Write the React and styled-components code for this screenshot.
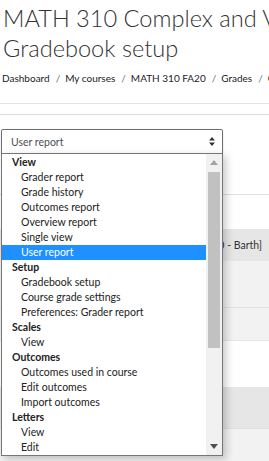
import React from 'react';
import styled, { createGlobalStyle } from 'styled-components';

const GlobalStyle = createGlobalStyle`
  body {
    margin: 0;
    background: #fff;
    font-family: Lato, "Noto Sans", sans-serif;
    color: #333;
    overflow: hidden;
  }
`;

const Page = styled.div`
  width: 269px;
  height: 461px;
  overflow: hidden;
  position: relative;
`;

const Title = styled.h1`
  margin: 3px 0 0 3px;
  font-size: 23.6px;
  line-height: 30px;
  font-weight: 300;
  color: #333;
  white-space: nowrap;
`;

const Crumbs = styled.nav`
  display: flex;
  align-items: center;
  margin: 8px 0 0 2px;
  font-size: 10px;
  line-height: 15px;
  color: #1d2125;
  white-space: nowrap;
`;

const Sep = styled.span`
  color: #6a737b;
  padding: 0 5px 0 6px;
`;

const TabStrip = styled.div`
  margin-top: 17px;
  height: 10px;
  border-top: 1px solid #e3e3e3;
  border-bottom: 1px solid #dcdcdc;
`;

const SelectWrap = styled.div`
  position: relative;
  margin: 14px 0 0 1px;
  width: 222px;
  z-index: 2;
`;

const SelectBox = styled.div`
  box-sizing: border-box;
  height: 25px;
  border: 1px solid #6e6e6e;
  border-radius: 2px 2px 0 0;
  display: flex;
  align-items: center;
  justify-content: space-between;
  padding: 0 7px 0 9px;
  font-size: 10.5px;
  color: #495057;
  box-shadow: 0 1px 2px rgba(0, 0, 0, 0.15);
`;

const Dropdown = styled.div`
  position: absolute;
  top: 24px;
  left: 0;
  box-sizing: border-box;
  width: 222px;
  height: 303px;
  border: 1px solid #767676;
  background: #fff;
  display: flex;
  box-shadow: 3px 3px 8px rgba(0, 0, 0, 0.22);
`;

const List = styled.ul`
  list-style: none;
  margin: 0;
  padding: 1px 0 0 0;
  flex: 1;
  overflow: hidden;
`;

const Option = styled.li`
  height: 15px;
  line-height: 15px;
  font-size: 10.5px;
  white-space: nowrap;
  padding-left: ${(p) => (p.$group ? '10px' : '19px')};
  font-weight: ${(p) => (p.$group ? 700 : 400)};
  color: ${(p) => (p.$active ? '#fff' : '#222')};
  background: ${(p) => (p.$active ? '#1e90ff' : 'transparent')};
`;

const Scrollbar = styled.div`
  width: 16px;
  background: #f1f1f1;
  display: flex;
  flex-direction: column;
`;

const ScrollButton = styled.div`
  height: 17px;
  display: flex;
  align-items: center;
  justify-content: center;
`;

const Track = styled.div`
  flex: 1;
  padding: 1px 2px 0 2px;
`;

const Thumb = styled.div`
  height: 176px;
  background: #c1c1c1;
`;

const Table = styled.div`
  margin-top: 40px;
  border-top: 1px solid #dee2e6;
`;

const Row = styled.div`
  height: ${(p) => p.$h}px;
  background: ${(p) => p.$bg};
  border-bottom: ${(p) => (p.$line ? `1px solid ${p.$line}` : 'none')};
  box-sizing: border-box;
  display: flex;
  align-items: center;
  justify-content: flex-end;
  padding-right: 7px;
  font-size: 10.5px;
  color: #333;
  white-space: nowrap;
`;

const Arrow = ({ dir, color }) => (
  <svg width="8" height="5" viewBox="0 0 8 5">
    {dir === 'up' ? (
      <polygon points="0,5 4,0 8,5" fill={color} />
    ) : (
      <polygon points="0,0 8,0 4,5" fill={color} />
    )}
  </svg>
);

const SortIcon = () => (
  <svg width="6" height="9" viewBox="0 0 6 9">
    <polygon points="0,3.5 3,0 6,3.5" fill="#333" />
    <polygon points="0,5.5 6,5.5 3,9" fill="#333" />
  </svg>
);

const options = [
  { label: 'View', group: true },
  { label: 'Grader report' },
  { label: 'Grade history' },
  { label: 'Outcomes report' },
  { label: 'Overview report' },
  { label: 'Single view' },
  { label: 'User report', active: true },
  { label: 'Setup', group: true },
  { label: 'Gradebook setup' },
  { label: 'Course grade settings' },
  { label: 'Preferences: Grader report' },
  { label: 'Scales', group: true },
  { label: 'View' },
  { label: 'Outcomes', group: true },
  { label: 'Outcomes used in course' },
  { label: 'Edit outcomes' },
  { label: 'Import outcomes' },
  { label: 'Letters', group: true },
  { label: 'View' },
  { label: 'Edit' },
];

export default function App() {
  return (
    <Page>
      <GlobalStyle />
      <Title>
        MATH 310 Complex and Vector Analysis
        <br />
        Gradebook setup
      </Title>
      <Crumbs>
        <span>Dashboard</span>
        <Sep>/</Sep>
        <span>My courses</span>
        <Sep>/</Sep>
        <span>MATH 310 FA20</span>
        <Sep>/</Sep>
        <span>Grades</span>
        <Sep>/</Sep>
        <span>Gradebook setup</span>
      </Crumbs>
      <TabStrip />
      <SelectWrap>
        <SelectBox>
          <span>User report</span>
          <SortIcon />
        </SelectBox>
        <Dropdown>
          <List>
            {options.map((o, i) => (
              <Option key={i} $group={o.group} $active={o.active}>
                {o.label}
              </Option>
            ))}
          </List>
          <Scrollbar>
            <ScrollButton>
              <Arrow dir="up" color="#a3a3a3" />
            </ScrollButton>
            <Track>
              <Thumb />
            </Track>
            <ScrollButton>
              <Arrow dir="down" color="#505050" />
            </ScrollButton>
          </Scrollbar>
        </Dropdown>
      </SelectWrap>
      <Table>
        <Row $h={34} $bg="#fff" />
        <Row $h={32} $bg="#e6e6e6">Course total [MATH 310 FA20 - Barth]</Row>
        <Row $h={47} $bg="#f2f2f2" $line="#dee2e6" />
        <Row $h={33} $bg="#f2f2f2" $line="#e8e8e8" />
        <Row $h={46} $bg="#fff" />
        <Row $h={42} $bg="#e6e6e6" $line="#dcdfe8" />
        <Row $h={40} $bg="#f2f2f2" />
      </Table>
    </Page>
  );
}
